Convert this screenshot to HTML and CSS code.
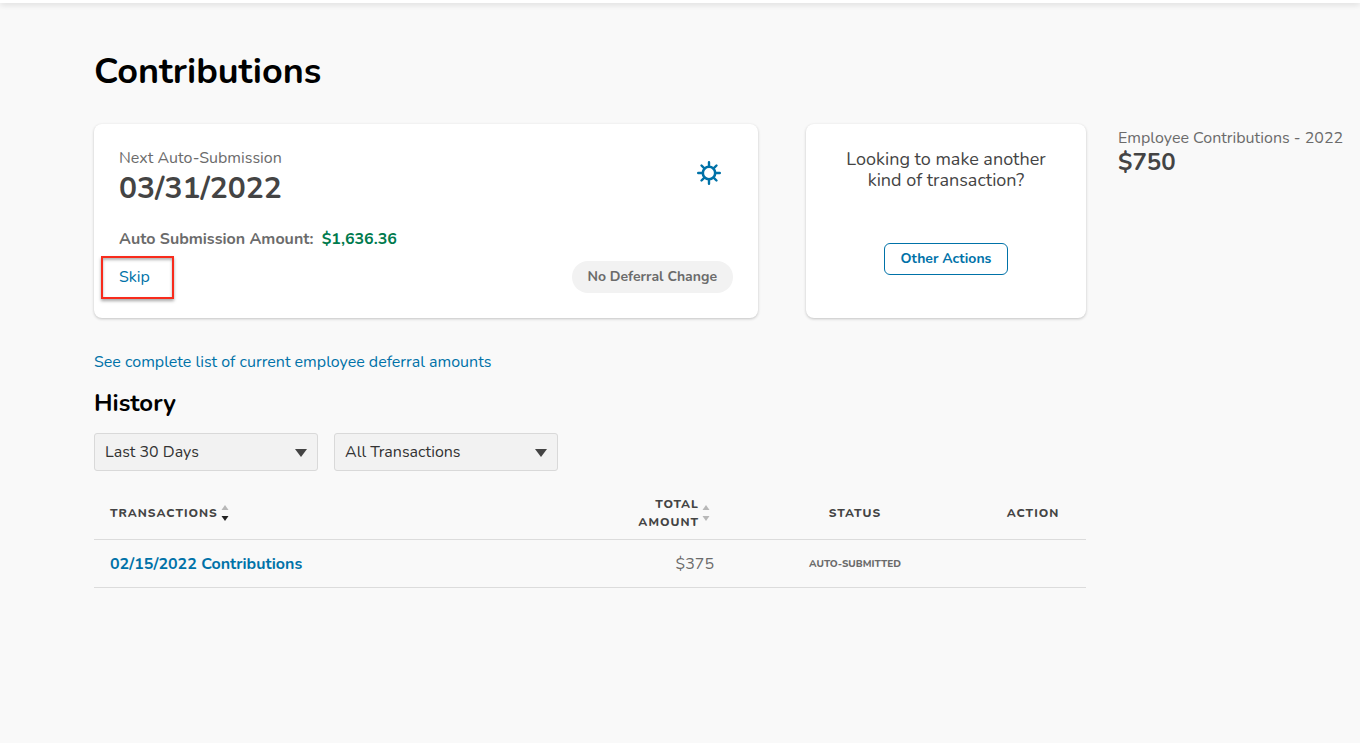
FILE: index.html
```html
<!DOCTYPE html>
<html lang="en">
<head>
<meta charset="utf-8">
<meta name="viewport" content="width=device-width, initial-scale=1">
<title>Contributions</title>
<link rel="stylesheet" href="styles.css">
</head>
<body>
<header class="topbar"></header>
<div class="page">
  <main class="main">
    <h1 class="page-title">Contributions</h1>
    <div class="cards">
      <section class="card next">
        <div class="next-head">
          <div>
            <p class="label">Next Auto-Submission</p>
            <p class="next-date">03/31/2022</p>
          </div>
          <button class="settings" type="button" aria-label="Settings">
            <svg width="24" height="24" viewBox="0 0 24 24" fill="none" stroke="currentColor" stroke-width="2.4" stroke-linecap="round">
              <circle cx="12" cy="12" r="6.200" stroke-width="2.600"/>
              <path d="M12 1.200v4M12 18.800v4M1.200 12h4M18.800 12h4M4.500 4.500l2.900 2.900M16.600 16.600l2.900 2.900M19.500 4.500l-2.900 2.900M7.400 16.600l-2.900 2.900"/>
            </svg>
          </button>
        </div>
        <p class="amount-line">Auto Submission Amount: <span class="amount">$1,636.36</span></p>
        <div class="next-foot">
          <span class="skip-wrap"><a class="link" href="#skip">Skip</a><span class="highlight"></span></span>
          <span class="pill">No Deferral Change</span>
        </div>
      </section>
      <section class="card other">
        <p class="other-text">Looking to make another kind of transaction?</p>
        <button class="outline-btn" type="button">Other Actions</button>
      </section>
    </div>
    <p class="deferral"><a class="link" href="#deferrals">See complete list of current employee deferral amounts</a></p>
    <h2 class="section-title">History</h2>
    <div class="filters">
      <select class="select" aria-label="Date range"><option>Last 30 Days</option></select>
      <select class="select" aria-label="Transaction type"><option>All Transactions</option></select>
    </div>
    <table class="history">
      <thead>
        <tr>
          <th class="col-name"><span class="sortable">TRANSACTIONS
            <svg class="sort" width="8" height="16" viewBox="0 0 8 16"><path d="M0.500 5h7L4 0z" fill="#b8b8b8"/><path d="M0.500 11h7L4 16z" fill="#222"/></svg></span></th>
          <th class="col-total"><span class="sortable"><span>TOTAL<br>AMOUNT</span>
            <svg class="sort" width="8" height="16" viewBox="0 0 8 16"><path d="M0.500 5h7L4 0z" fill="#b8b8b8"/><path d="M0.500 11h7L4 16z" fill="#b8b8b8"/></svg></span></th>
          <th class="col-status">STATUS</th>
          <th class="col-action">ACTION</th>
        </tr>
      </thead>
      <tbody>
        <tr>
          <td class="col-name"><a class="link strong" href="#contribution">02/15/2022 Contributions</a></td>
          <td class="col-total">$375</td>
          <td class="col-status"><span class="status">AUTO-SUBMITTED</span></td>
          <td class="col-action"></td>
        </tr>
      </tbody>
    </table>
  </main>
  <aside class="summary">
    <p class="label">Employee Contributions - 2022</p>
    <p class="summary-value">$750</p>
  </aside>
</div>
</body>
</html>
```
FILE: styles.css
```css
* { box-sizing: border-box; }
body {
  margin: 0;
  background: #f9f9f9;
  color: #444;
  font: 16px/24px Nunito, "Open Sans", sans-serif;
}
h1, h2, p { margin: 0; }
button, select { font: inherit; }
.topbar { height: 3px; background: #fff; box-shadow: 0 1px 6px rgba(0, 0, 0, .2); }
.page {
  display: grid;
  grid-template-columns: minmax(0, 1fr) 226px;
  column-gap: 32px;
  padding: 45px 16px 48px 94px;
}
.page-title { color: #000; font-size: 36px; line-height: 48px; font-weight: 700; margin-bottom: 28px; }
.cards { display: grid; grid-template-columns: minmax(0, 1fr) 280px; gap: 48px; }
.card { background: #fff; border-radius: 8px; padding: 22px 25px 25px; box-shadow: 0 1px 3px rgba(0, 0, 0, .22); }
.next-head { display: flex; justify-content: space-between; align-items: center; }
.label { color: #6b6b6b; white-space: nowrap; }
.next-date { font-size: 30px; line-height: 38px; font-weight: 700; }
.settings { display: flex; padding: 0; margin: 0 12px 9px 0; border: 0; background: none; color: #0072a8; }
.amount-line { margin-top: 19px; color: #6b6b6b; font-weight: 700; }
.amount { margin-left: 4px; color: #007a4d; }
.next-foot { display: flex; justify-content: space-between; align-items: center; margin-top: 10px; }
.link { color: #0072a8; text-decoration: none; }
.strong { font-weight: 700; }
.skip-wrap { position: relative; }
.highlight {
  position: absolute; top: -9px; left: -18px; width: 73px; height: 43px;
  border: 2px solid #f82b1c; box-shadow: 0 2px 3px rgba(0, 0, 0, .35), inset 0 2px 3px rgba(0, 0, 0, .3);
  pointer-events: none;
}
.pill { padding: 4px 16px; border-radius: 16px; background: #f2f2f2; color: #6b6b6b; font-size: 14px; font-weight: 700; }
.other { display: flex; flex-direction: column; align-items: center; text-align: center; padding: 25px 32px; }
.other-text { font-size: 18px; line-height: 21px; }
.outline-btn {
  margin-top: 52px; height: 32px; padding: 0 16px; border: 1px solid #0072a8; border-radius: 6px;
  background: #fff; color: #0072a8; font-size: 14px; font-weight: 700; line-height: 24px;
}
.deferral { margin-top: 32px; }
.section-title { margin-top: 13px; color: #000; font-size: 24px; line-height: 32px; font-weight: 700; }
.filters { display: flex; gap: 16px; margin-top: 14px; }
.select {
  appearance: none; width: 224px; height: 38px; padding: 0 32px 0 10px;
  border: 1px solid #d9d9d9; border-radius: 3px; color: #333;
  background: #f2f2f2 url("data:image/svg+xml,%3Csvg xmlns='http://www.w3.org/2000/svg' width='12' height='8'%3E%3Cpath d='M0 0h12L6 8z' fill='%23444'/%3E%3C/svg%3E") no-repeat right 10px top 15px;
}
.history { width: 100%; margin-top: 15px; table-layout: fixed; border-collapse: collapse; }
.history th { height: 53px; padding: 2px 0 0; font-size: 12px; line-height: 18px; letter-spacing: 1px; font-weight: 800; }
.history td { height: 48px; padding: 1px 0 0; }
.history th, .history td { border-bottom: 1px solid #dcdcdc; }
.history .col-name { width: 38%; padding-left: 16px; text-align: left; }
.history .col-total { padding-right: 16px; text-align: right; color: #6b6b6b; }
.history th.col-total { padding-right: 20px; color: #444; }
.history .col-status { width: 250px; text-align: center; }
.history .col-action { width: 106px; text-align: center; }
.sortable { display: inline-flex; align-items: center; gap: 3px; }
.status { display: block; color: #6b6b6b; font-size: 10px; line-height: 22px; font-weight: 800; }
.summary { padding-top: 78px; }
.summary-value { font-size: 24px; line-height: 24px; font-weight: 700; }
```
